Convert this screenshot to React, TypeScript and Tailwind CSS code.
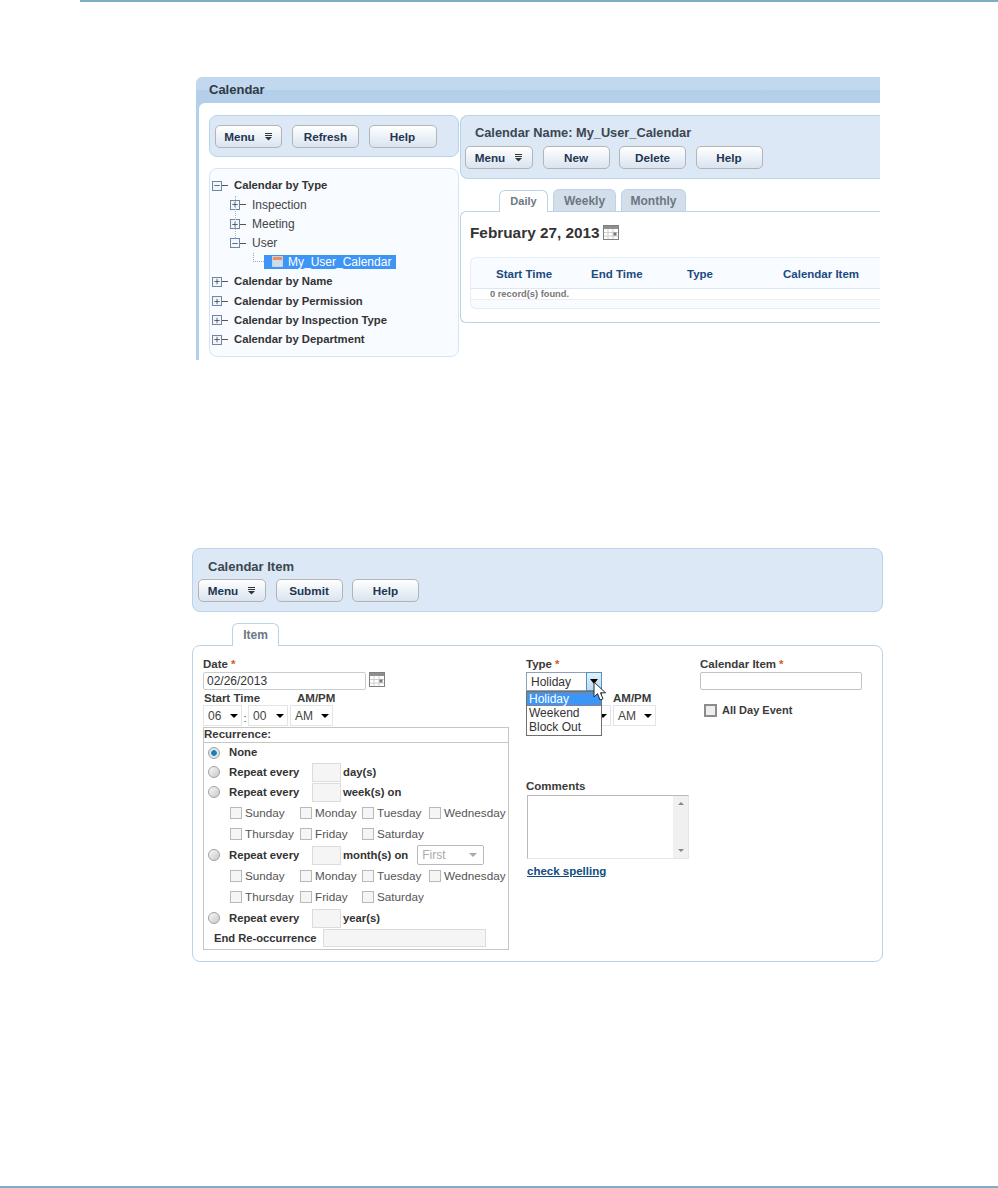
import React from 'react';
import { Minus, Plus } from 'lucide-react';

const btn =
  'flex h-[23px] items-center justify-center rounded-[5px] border border-[#b4b4b4] bg-gradient-to-b from-white to-[#d9e4f0] text-[11.7px] font-bold text-[#1f3550]';

const MenuGlyph = () => (
  <svg width="9" height="8" viewBox="0 0 9 8" className="ml-[9px]">
    <path d="M1 0.5h7M1 2.5h7" stroke="#333" strokeWidth="1" />
    <path d="M1 4h7L4.5 7.5z" fill="#333" />
  </svg>
);

const MenuButton = ({ w = 'w-[68px]' }: { w?: string }) => (
  <button className={`${btn} ${w}`}>
    Menu
    <MenuGlyph />
  </button>
);

const Btn = ({ label, w = 'w-[67px]' }: { label: string; w?: string }) => (
  <button className={`${btn} ${w}`}>{label}</button>
);

const CalIcon = ({ className = '' }: { className?: string }) => (
  <svg width="16" height="15" viewBox="0 0 16 15" className={className}>
    <rect x="0.5" y="0.5" width="15" height="14" fill="#fff" stroke="#808080" />
    <rect x="1" y="1" width="14" height="3" fill="#8f8f8f" />
    <path d="M5 4v10M10 4v10M1 7.5h14M1 11h14" stroke="#cfcfcf" />
    <rect x="10.5" y="7.5" width="3" height="3" fill="#777" />
  </svg>
);

const Tree = ({ open }: { open?: boolean }) => (
  <span className="flex w-[20px] shrink-0 items-center">
    <span className="flex h-[10px] w-[10px] items-center justify-center border border-[#6f86a6] bg-[#f2f5f9]">
      {open ? <Minus size={9} strokeWidth={2} color="#223" /> : <Plus size={9} strokeWidth={2} color="#223" />}
    </span>
    <span className="h-px w-[6px] bg-[#555]" />
  </span>
);

const TreeRow = ({ label, open, bold, indent }: { label: string; open?: boolean; bold?: boolean; indent?: boolean }) => (
  <div className={`flex h-[19.25px] items-center ${indent ? 'pl-[18px]' : ''}`}>
    <Tree open={open} />
    <span className={`ml-[2px] ${bold ? 'text-[11.3px] font-bold text-[#333]' : 'text-[12px] text-[#444]'}`}>{label}</span>
  </div>
);

const SelectBox = ({ value, w }: { value: string; w: string }) => (
  <div className={`flex h-[21px] items-center border border-[#e2e4e8] bg-white pl-[4px] pr-[3px] text-[12px] text-[#444] ${w}`}>
    {value}
    <span className="ml-auto h-0 w-0 border-x-[4px] border-t-[4px] border-x-transparent border-t-black" />
  </div>
);

const Radio = ({ on }: { on?: boolean }) => (
  <span className={`h-[12px] w-[12px] shrink-0 rounded-full border border-[#a0a0a0] ${on ? 'bg-[radial-gradient(circle,#1683b8_35%,#dfe6ea_45%)]' : 'bg-gradient-to-br from-[#fafafa] to-[#c8c8c8]'}`} />
);

const SmallInput = ({ w = 'w-[29px]', h = 'h-[19px]' }: { w?: string; h?: string }) => (
  <span className={`block border border-[#dcdcdc] bg-[#f5f5f5] ${w} ${h}`} />
);

const RepeatRow = ({ on, label, h = 'h-[20px]', unit, children }: { on?: boolean; label: string; h?: string; unit?: string; children?: React.ReactNode }) => (
  <div className={`flex items-center pl-[4px] ${h}`}>
    <Radio on={on} />
    <span className="ml-[9px] w-[83px] text-[11.3px] font-bold text-[#333]">{label}</span>
    {unit && <SmallInput />}
    {unit && <span className="ml-[2px] text-[11.3px] font-bold text-[#333]">{unit}</span>}
    {children}
  </div>
);

const Day = ({ label, w }: { label: string; w: string }) => (
  <span className={`flex items-center ${w}`}>
    <span className="h-[12px] w-[12px] shrink-0 border border-[#b9b9b9] bg-[#f5f5f5]" />
    <span className="ml-[3px] text-[11.7px] text-[#555]">{label}</span>
  </span>
);

const DayRows = () => (
  <>
    <div className="flex h-[21.5px] items-center pl-[26px]">
      <Day label="Sunday" w="w-[70px]" />
      <Day label="Monday" w="w-[62px]" />
      <Day label="Tuesday" w="w-[67px]" />
      <Day label="Wednesday" w="w-[78px]" />
    </div>
    <div className="flex h-[21.5px] items-center pl-[26px]">
      <Day label="Thursday" w="w-[70px]" />
      <Day label="Friday" w="w-[62px]" />
      <Day label="Saturday" w="w-[67px]" />
    </div>
  </>
);

const Label = ({ children, req }: { children: React.ReactNode; req?: boolean }) => (
  <div className="h-[14px] text-[11.5px] leading-[14px] font-bold text-[#3a3a3a]">
    {children}
    {req && <span className="ml-[3px] text-[#e0561b]">*</span>}
  </div>
);

const Tab = ({ label, active, w, text = 'text-[12px]', h = 'h-[23px]' }: { label: string; active?: boolean; w: string; text?: string; h?: string }) => (
  <div
    className={`flex items-center justify-center rounded-t-[6px] border border-b-0 border-[#b9d3ea] font-bold ${h} ${text} ${w} ${
      active ? 'relative top-px bg-white text-[#6b7885]' : 'bg-[#d3deea] text-[#6d7681]'
    }`}
  >
    {label}
  </div>
);

const CalendarPanel = () => (
  <div className="ml-[196px] h-[283px] w-[684px] overflow-hidden">
    <div className="h-[26px] rounded-tl-[6px] bg-gradient-to-b from-[#c2d8ee] from-50% to-[#b3cfe9] to-50% pl-[13px] pt-[3px] text-[13px] leading-[20px] font-bold text-[#2f3a44]">
      Calendar
    </div>
    <div className="h-[257px] bg-[#b3cfe9] pl-[3px]">
      <div className="flex h-full gap-[1px] rounded-tl-[6px] bg-white pl-[10px] pt-[12px]">
        <div className="w-[250px] shrink-0">
          <div className="flex h-[42px] items-center rounded-[8px] border border-[#b9d3ea] bg-[#dce8f5] pl-[5px] pt-[1px]">
            <MenuButton w="w-[67px]" />
            <span className="w-[10px]" />
            <Btn label="Refresh" />
            <span className="w-[9.5px]" />
            <Btn label="Help" w="w-[68px]" />
          </div>
          <div className="relative mt-[11px] h-[189px] rounded-[8px] border border-[#d5e5f3] bg-[#f8fbff] pl-[2px] pt-[7px]">
            <span className="absolute left-[25px] top-[27px] h-[42px] w-0 border-l border-dotted border-[#b5b5b5]" />
            <span className="absolute left-[43px] top-[84px] h-[9px] w-[11px] border-b border-l border-dotted border-[#a5a5a5]" />
            <TreeRow label="Calendar by Type" open bold />
            <TreeRow label="Inspection" indent />
            <TreeRow label="Meeting" indent />
            <TreeRow label="User" open indent />
            <div className="flex h-[19.25px] items-center pl-[52px]">
              <span className="mb-[2px] flex h-[14px] w-[132px] items-center bg-[#3d95f5] pl-[8px] text-[12px] text-white">
                <span className="mr-[5px] h-[11px] w-[11px] border border-[#c9d3dd] bg-gradient-to-b from-[#e89060] from-30% to-[#cfdcec] to-30%" />
                My_User_Calendar
              </span>
            </div>
            <TreeRow label="Calendar by Name" bold />
            <TreeRow label="Calendar by Permission" bold />
            <TreeRow label="Calendar by Inspection Type" bold />
            <TreeRow label="Calendar by Department" bold />
          </div>
        </div>
        <div className="min-w-0 flex-1">
          <div className="h-[64px] rounded-l-[8px] border border-r-0 border-[#b9d3ea] bg-[#dce8f5] pl-[4px]">
            <div className="pl-[10px] pt-[8px] text-[12.8px] leading-[17px] font-bold text-[#3b4650]">Calendar Name: My_User_Calendar</div>
            <div className="mt-[5px] flex gap-[9.5px]">
              <MenuButton />
              <Btn label="New" />
              <Btn label="Delete" />
              <Btn label="Help" />
            </div>
          </div>
          <div className="mt-[10px] flex gap-[5px] pl-[39px]">
            <Tab label="Daily" active w="w-[49px]" text="text-[11px]" h="h-[22px]" />
            <Tab label="Weekly" w="w-[63px]" h="h-[22px]" />
            <Tab label="Monthly" w="w-[65px]" h="h-[22px]" />
          </div>
          <div className="h-[112px] rounded-bl-[6px] rounded-tl-[6px] border border-r-0 border-[#b9d3ea] bg-white pl-[9px]">
            <div className="flex h-[45px] items-start pt-[12px] text-[15.35px] leading-[18px] font-bold text-[#333]">
              February 27, 2013
              <CalIcon className="ml-[3px] mt-[1px]" />
            </div>
            <div className="h-[52px] rounded-l-[6px] border border-r-0 border-[#e4eef7] bg-[#f8fbff]">
              <div className="flex h-[31px] items-center border-b border-[#dbe7f2] pt-[3px] text-[11.5px] font-bold text-[#1b4a80]">
                <span className="w-[120px] pl-[25px]">Start Time</span>
                <span className="w-[96px]">End Time</span>
                <span className="w-[96px]">Type</span>
                <span>Calendar Item</span>
              </div>
              <div className="h-[11px] border-b border-[#e9eef3] bg-white pl-[19px] text-[9.3px] leading-[10px] font-bold text-[#777]">0 record(s) found.</div>
            </div>
          </div>
        </div>
      </div>
    </div>
  </div>
);

const ItemPanel = () => (
  <div className="ml-[192px] mt-[188px] w-[691px]">
    <div className="h-[64px] rounded-[8px] border border-[#b9d3ea] bg-[#dce8f5] pl-[5px]">
      <div className="pl-[10px] pt-[10px] text-[13px] leading-[16px] font-bold text-[#3b4650]">Calendar Item</div>
      <div className="mt-[4px] flex gap-[9.5px]">
        <MenuButton />
        <Btn label="Submit" />
        <Btn label="Help" />
      </div>
    </div>
    <div className="mt-[10px] pl-[40px]">
      <Tab label="Item" active w="w-[47px]" />
    </div>
    <div className="flex h-[317px] rounded-[8px] border border-[#b9d3ea] bg-white pl-[10px] pt-[11px]">
      <div className="w-[323px] shrink-0">
        <Label req>Date</Label>
        <div className="mt-[1px] flex items-start">
          <div className="h-[18px] w-[163px] rounded-[2px] border border-[#c9cdd3] pl-[3px] text-[12px] leading-[17px] text-[#333]">02/26/2013</div>
          <CalIcon className="ml-[2.5px]" />
        </div>
        <div className="mt-[2px] flex h-[13px] items-center text-[11.5px] font-bold text-[#3a3a3a]">
          <span className="w-[94px] pl-[1px]">Start Time</span>
          AM/PM
        </div>
        <div className="flex items-center">
          <SelectBox value="06" w="w-[39px]" />
          <span className="w-[6px] pt-[5px] text-center text-[11px] text-[#444]">:</span>
          <SelectBox value="00" w="w-[40px]" />
          <span className="w-[2px]" />
          <SelectBox value="AM" w="w-[43px]" />
        </div>
        <div className="h-[223px] w-[306px] border border-[#c8c6c0]">
          <div className="h-[15px] border-b border-[#c8c6c0] text-[11.5px] leading-[13px] font-bold text-[#3a3a3a]">Recurrence:</div>
          <div className="pt-[0.5px]">
            <RepeatRow on label="None" h="h-[19px]" />
            <RepeatRow label="Repeat every" unit="day(s)" />
            <RepeatRow label="Repeat every" unit="week(s) on" />
            <DayRows />
            <RepeatRow label="Repeat every" unit="month(s) on">
              <span className="ml-[9px] flex h-[20px] w-[67px] items-center justify-between rounded-[2px] border border-[#b9b9b9] pl-[4px] pr-[6px] text-[12px] text-[#aaa]">
                First
                <span className="h-0 w-0 border-x-[4px] border-t-[4px] border-x-transparent border-t-[#aaa]" />
              </span>
            </RepeatRow>
            <DayRows />
            <RepeatRow label="Repeat every" unit="year(s)" />
            <div className="flex h-[20px] items-center pl-[10px] text-[11.2px] font-bold text-[#333]">
              <span className="w-[109px]">End Re-occurrence</span>
              <SmallInput w="w-[163px]" h="h-[18px]" />
            </div>
          </div>
        </div>
      </div>
      <div className="w-[174px] shrink-0">
        <Label req>Type</Label>
        <div className="relative mt-[1px] h-[18px] w-[76px]">
          <div className="flex h-[19px] items-center border border-[#8da2b8] bg-white pl-[4px] text-[12px] text-[#333]">Holiday</div>
          <div className="absolute right-0 top-0 flex h-[19px] w-[16px] items-center justify-center border border-[#4f92c4] bg-gradient-to-b from-[#e3f0fb] to-[#bcdaf3]">
            <span className="h-0 w-0 border-x-[4px] border-t-[5px] border-x-transparent border-t-black" />
          </div>
          <svg width="15" height="22" viewBox="0 0 15 22" className="absolute left-[67px] top-[9px] z-20">
            <path d="M1 1v15l3.5-3.5 2.5 6.500 3-1.200-2.500-6h5z" fill="#fff" stroke="#1d2b3a" strokeWidth="1" />
          </svg>
          <div className="absolute left-0 top-[19px] z-10 h-[45px] w-[76px] border border-[#707070] bg-white text-[12px] leading-[14px] text-[#333]">
            <div className="h-[14px] border-y border-dotted border-[#d2691e] bg-[#3d95f5] pl-[2px] leading-[12px] text-white">Holiday</div>
            <div className="pl-[2px]">Weekend</div>
            <div className="pl-[2px]">Block Out</div>
          </div>
        </div>
        <div className="mt-[2px] flex h-[13px] items-center pl-[87px] text-[11.5px] font-bold text-[#3a3a3a]">AM/PM</div>
        <div className="flex gap-[2px] pl-[1px]">
          <SelectBox value="" w="w-[84px]" />
          <SelectBox value="AM" w="w-[43px]" />
        </div>
        <div className="mt-[53px]">
          <Label>Comments</Label>
        </div>
        <div className="ml-px mt-[2px] flex h-[64px] w-[162px] justify-end border border-[#b9b9b9] border-b-[#e5e5e5] border-r-[#e5e5e5]">
          <div className="flex w-[15px] flex-col items-center justify-between bg-[#f0f0f0] py-[6px]">
            <span className="h-0 w-0 border-x-[3px] border-b-[3px] border-x-transparent border-b-[#888]" />
            <span className="h-0 w-0 border-x-[3px] border-t-[3px] border-x-transparent border-t-[#888]" />
          </div>
        </div>
        <a className="ml-px mt-[4px] block text-[11.5px] font-bold text-[#0f4c81] underline">check spelling</a>
      </div>
      <div className="w-[162px] shrink-0">
        <Label req>Calendar Item</Label>
        <div className="mt-[1px] h-[18px] w-[162px] rounded-[2px] border border-[#c0c4ca]" />
        <div className="mt-[12px] flex items-center pl-[4px]">
          <span className="h-[13px] w-[13px] border-2 border-[#8c8c8c] bg-[#eeeeee]" />
          <span className="ml-[5px] text-[11px] font-bold text-[#3a3a3a]">All Day Event</span>
        </div>
      </div>
    </div>
  </div>
);

export default function App() {
  return (
    <div className="flex h-[1188px] w-[998px] flex-col overflow-hidden bg-white font-['Liberation_Sans',Arial,sans-serif]">
      <div className="ml-[80px] h-[2px] bg-[#7ab0c2]" />
      <div className="h-[75px]" />
      <CalendarPanel />
      <ItemPanel />
      <div className="mt-auto h-[2px] bg-[#7ab0c2]" />
    </div>
  );
}
